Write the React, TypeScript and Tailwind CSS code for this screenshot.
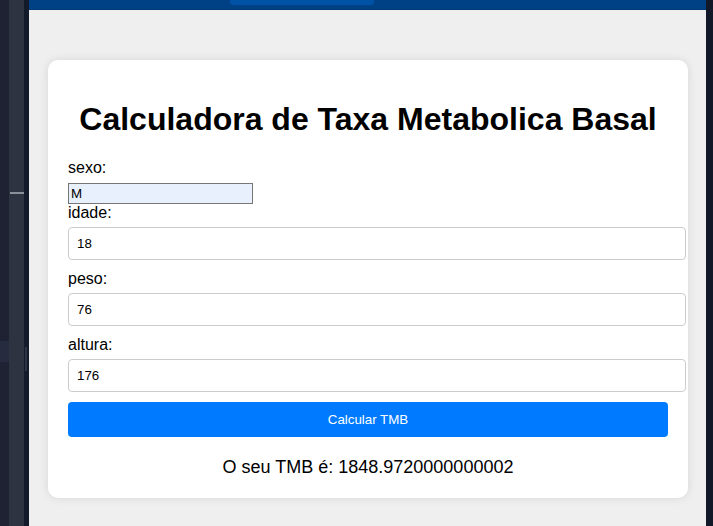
export default function App() {
  return (
    <div className="flex h-[526px] w-[713px] overflow-hidden" style={{ fontFamily: '"Liberation Sans", Arial, sans-serif' }}>
      {/* Editor side strip */}
      <div className="flex h-full w-[29px] shrink-0">
        <div className="flex h-full w-[9px] flex-col bg-[#1e2233]">
          <div className="mt-[341px] h-[21px] w-full bg-[#262b40]" />
        </div>
        <div className="flex h-full w-[15px] flex-col bg-[#2d3340]">
          <div className="mt-[192px] h-[2px] w-[14px] self-end bg-[#8b8f99]" />
        </div>
        <div className="flex h-full w-[5px] flex-col bg-[#131a29]">
          <div className="ml-px mt-[347px] h-[24px] w-[2px] bg-[#2d3445]" />
        </div>
      </div>

      {/* Preview */}
      <div className="flex h-full w-[677px] shrink-0 flex-col bg-[#efefef]">
        <div className="flex h-[10px] shrink-0 border-b border-[#003a75] bg-[#004085]">
          <div className="ml-[201px] h-[5px] w-[144px] rounded-b-[3px] bg-[#0052a6]" />
        </div>

        <div className="px-[19px] pt-[50px]">
          <div className="w-[640px] rounded-[10px] bg-white p-[20px] shadow-[0_0_10px_rgba(0,0,0,0.1)]">
            <h1 className="my-[21px] text-center text-[32px] font-bold leading-[37px] text-black">
              Calculadora de Taxa Metabolica Basal
            </h1>

            <label className="mb-[6px] block text-[16px] leading-[18px] text-black">sexo:</label>
            <input
              readOnly
              value="M"
              className="block h-[21px] w-[185px] border border-[#767676] bg-[#e8f0fe] px-[2px] text-[13.33px] text-black outline-none"
            />

            <label className="mb-[5px] block text-[16px] leading-[18px] text-black">idade:</label>
            <input
              readOnly
              value="18"
              className="mb-[10px] box-content block h-[15px] w-[600px] rounded-[4px] border border-[#cccccc] px-[8px] py-[8px] text-[13.33px] leading-[15px] text-black outline-none"
            />

            <label className="mb-[5px] block text-[16px] leading-[18px] text-black">peso:</label>
            <input
              readOnly
              value="76"
              className="mb-[10px] box-content block h-[15px] w-[600px] rounded-[4px] border border-[#cccccc] px-[8px] py-[8px] text-[13.33px] leading-[15px] text-black outline-none"
            />

            <label className="mb-[5px] block text-[16px] leading-[18px] text-black">altura:</label>
            <input
              readOnly
              value="176"
              className="mb-[10px] box-content block h-[15px] w-[600px] rounded-[4px] border border-[#cccccc] px-[8px] py-[8px] text-[13.33px] leading-[15px] text-black outline-none"
            />

            <button className="block h-[35px] w-[600px] rounded-[4px] bg-[#007bff] text-[13.33px] text-white">
              Calcular TMB
            </button>

            <p className="mt-[20px] text-center text-[18px] leading-[21px] text-black">
              O seu TMB é: 1848.9720000000002
            </p>
          </div>
        </div>
      </div>

      <div className="h-full w-[7px] shrink-0 bg-[#111827]" />
    </div>
  );
}
